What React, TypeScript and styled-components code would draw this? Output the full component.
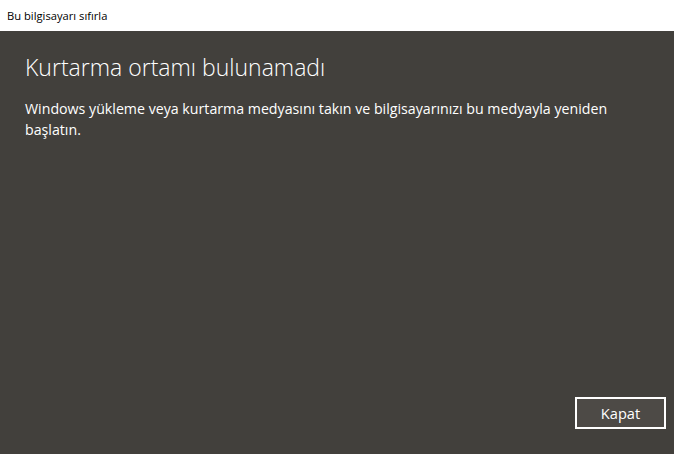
import * as React from 'react';
import styled, { createGlobalStyle } from 'styled-components';

const GlobalStyle = createGlobalStyle`
  html, body {
    margin: 0;
    padding: 0;
    width: 674px;
    height: 454px;
    overflow: hidden;
    background: #42403c;
  }
  * {
    box-sizing: border-box;
  }
`;

export default function App() {
  return (
    <Window>
      <GlobalStyle />
      <TitleBar>Bu bilgisayarı sıfırla</TitleBar>
      <Body>
        <Heading>Kurtarma ortamı bulunamadı</Heading>
        <Message>
          Windows yükleme veya kurtarma medyasını takın ve bilgisayarınızı bu medyayla yeniden
          <br />
          başlatın.
        </Message>
        <Footer>
          <Button>Kapat</Button>
        </Footer>
      </Body>
    </Window>
  );
}

const Window = styled.div`
  display: flex;
  flex-direction: column;
  width: 674px;
  height: 454px;
  font-family: 'Open Sans', 'Noto Sans', sans-serif;
`;

const TitleBar = styled.div`
  display: flex;
  align-items: center;
  height: 31px;
  padding: 0 7px 1px;
  background: #ffffff;
  color: #000000;
  font-size: 11.2px;
`;

const Body = styled.div`
  flex: 1;
  display: flex;
  flex-direction: column;
  padding: 21px 8px 25px 25px;
  background: #42403c;
`;

const Heading = styled.h1`
  margin: 0;
  font-size: 23px;
  font-weight: 300;
  line-height: 30px;
  color: #ffffff;
`;

const Message = styled.p`
  margin: 16px 0 0;
  font-size: 14.2px;
  line-height: 21px;
  color: #ffffff;
  white-space: nowrap;
`;

const Footer = styled.div`
  display: flex;
  justify-content: flex-end;
  margin-top: auto;
`;

const Button = styled.button`
  width: 91px;
  height: 32px;
  border: 2px solid #ffffff;
  background: #4d4a46;
  color: #ffffff;
  font-family: inherit;
  font-size: 14.6px;
  padding: 0 0 1px;
`;
